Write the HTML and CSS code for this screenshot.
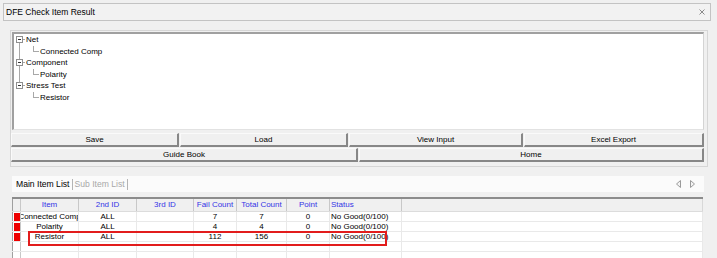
FILE: index.html
```html
<!DOCTYPE html>
<html>
    <head>
        <title> DFE Check Item Result </title>
        <link rel="stylesheet" href="styles.css">
    </head>
    <body>
        <div class="window">

            <!-- Title bar -->
            <div class="titlebar">
                <span>DFE Check Item Result</span>
                <svg class="closeIcon" width="6" height="6" viewBox="0 0 6 6">
                    <path d="M0.5 0.5 L5.5 5.5 M5.5 0.5 L0.5 5.5" stroke="#8a8a8a" stroke-width="1" fill="none"/>
                </svg>
            </div>

            <!-- Tree + buttons -->
            <div class="group">
                <div class="tree">
                    <div class="branch">
                        <div class="node parent"><span class="toggle"></span>Net</div>
                        <div class="node leaf">Connected Comp</div>
                    </div>
                    <div class="branch">
                        <div class="node parent"><span class="toggle"></span>Component</div>
                        <div class="node leaf">Polarity</div>
                    </div>
                    <div class="branch">
                        <div class="node parent"><span class="toggle"></span>Stress Test</div>
                        <div class="node leaf">Resistor</div>
                    </div>
                </div>

                <div class="btnRow firstRow">
                    <button class="btn saveBtn">Save</button>
                    <button class="btn loadBtn">Load</button>
                    <button class="btn viewBtn">View Input</button>
                    <button class="btn excelBtn">Excel Export</button>
                </div>
                <div class="btnRow secondRow">
                    <button class="btn guideBtn">Guide Book</button>
                    <button class="btn homeBtn">Home</button>
                </div>
            </div>

            <!-- Tabs -->
            <div class="tabs">
                <span class="tab">Main Item List</span>
                <span class="tab inactiveTab">Sub Item List</span>
                <div class="tabArrows">
                    <svg width="5" height="8" viewBox="0 0 5 8">
                        <path d="M4.5 0.5 L0.5 4 L4.5 7.5 Z" fill="#f4f4f4" stroke="#9a9a9a" stroke-width="1"/>
                    </svg>
                    <svg width="5" height="8" viewBox="0 0 5 8">
                        <path d="M0.5 0.5 L4.5 4 L0.5 7.5 Z" fill="#f4f4f4" stroke="#9a9a9a" stroke-width="1"/>
                    </svg>
                </div>
            </div>

            <!-- Result grid -->
            <div class="gridWrap">
                <table class="grid">
                    <colgroup>
                        <col style="width:8px">
                        <col style="width:58px">
                        <col style="width:58px">
                        <col style="width:57px">
                        <col style="width:43px">
                        <col style="width:50px">
                        <col style="width:43px">
                        <col style="width:72px">
                        <col>
                    </colgroup>
                    <tr>
                        <th class="rowHead"></th>
                        <th>Item</th>
                        <th>2nd ID</th>
                        <th>3rd ID</th>
                        <th>Fail Count</th>
                        <th>Total Count</th>
                        <th>Point</th>
                        <th class="leftText">Status</th>
                        <th class="filler"></th>
                    </tr>
                    <tr>
                        <td class="rowHead"><span class="flag"></span></td>
                        <td><div class="clip">Connected Comp</div></td>
                        <td>ALL</td>
                        <td></td>
                        <td>7</td>
                        <td>7</td>
                        <td>0</td>
                        <td class="leftText">No Good(0/100)</td>
                        <td></td>
                    </tr>
                    <tr>
                        <td class="rowHead"><span class="flag"></span></td>
                        <td><div class="clip">Polarity</div></td>
                        <td>ALL</td>
                        <td></td>
                        <td>4</td>
                        <td>4</td>
                        <td>0</td>
                        <td class="leftText">No Good(0/100)</td>
                        <td></td>
                    </tr>
                    <tr>
                        <td class="rowHead"><span class="flag"></span></td>
                        <td><div class="clip">Resistor</div></td>
                        <td>ALL</td>
                        <td></td>
                        <td>112</td>
                        <td>156</td>
                        <td>0</td>
                        <td class="leftText">No Good(0/100)</td>
                        <td></td>
                    </tr>
                    <tr>
                        <td class="rowHead"></td><td></td><td></td><td></td><td></td><td></td><td></td><td></td><td></td>
                    </tr>
                    <tr>
                        <td class="rowHead"></td><td></td><td></td><td></td><td></td><td></td><td></td><td></td><td></td>
                    </tr>
                </table>
                <div class="highlight"></div>
            </div>

        </div>
    </body>
</html>
```

FILE: styles.css
```css
html, body{
    margin: 0;
    height: 100%;
    overflow: hidden;
}

body{
    background-color: #f0f0f0;
    font-family: Tahoma, "Liberation Sans", Arial, sans-serif;
    font-size: 8px;
    color: #000;
}

.window{
    padding: 3px 6px 0 3px;
}

/* Title bar */

.titlebar{
    height: 18px;
    box-sizing: border-box;
    border: 1px solid #c3c3c3;
    background: #f2f2f2;
    display: flex;
    align-items: center;
    justify-content: space-between;
    padding: 0 5px 0 2px;
    font-size: 8.5px;
}

/* Tree group */

.group{
    margin: 9px 3px 0 7px;
    border: 1px solid #d6d6d6;
    padding: 1px 3px 4px 0;
}

.tree{
    height: 98px;
    box-sizing: border-box;
    margin-left: 1px;
    background: white;
    border-top: 2px solid #a0a0a0;
    border-left: 2px solid #a0a0a0;
    border-right: 1px solid #d4d4d4;
    border-bottom: 1px solid #e2e2e2;
}

.branch{
    position: relative;
}

.branch:not(:last-child)::before{
    content: "";
    position: absolute;
    left: 5px;
    top: 9px;
    bottom: -2px;
    border-left: 1px solid #a8a8a8;
}

.node{
    position: relative;
    height: 11.5px;
    line-height: 11.5px;
    white-space: nowrap;
}

.parent{
    padding-left: 12px;
}

.parent::after{
    content: "";
    position: absolute;
    left: 9px;
    top: 5px;
    width: 2px;
    border-top: 1px solid #a8a8a8;
}

.toggle{
    position: absolute;
    left: 2px;
    top: 2px;
    width: 7px;
    height: 7px;
    box-sizing: border-box;
    border: 1px solid #8f8f8f;
    background: white;
}

.toggle::after{
    content: "";
    position: absolute;
    left: 1px;
    right: 1px;
    top: 2px;
    height: 1px;
    background: #333;
}

.leaf{
    padding-left: 26px;
}

.leaf::before{
    content: "";
    position: absolute;
    left: 19px;
    top: 0;
    width: 5px;
    height: 5px;
    border-left: 1px solid #a8a8a8;
    border-bottom: 1px solid #a8a8a8;
}

/* Buttons */

.btnRow{
    display: flex;
    gap: 1px;
}

.firstRow{
    margin-top: 3px;
}

.secondRow{
    margin-top: 1px;
}

.btn{
    height: 14px;
    box-sizing: border-box;
    margin: 0;
    padding: 0;
    font-family: inherit;
    font-size: 8px;
    color: #000;
    background: #f0f0f0;
    border-style: solid;
    border-width: 1px 2px 2px 1px;
    border-color: #fafafa #878787 #878787 #fafafa;
    border-radius: 0;
    line-height: 10px;
}

.saveBtn, .loadBtn{
    width: 168px;
}

.viewBtn{
    width: 174px;
}

.excelBtn, .homeBtn{
    flex: 1;
}

.guideBtn{
    width: 347px;
}

/* Tabs */

.tabs{
    display: flex;
    align-items: center;
    height: 16px;
    background: #fbfbfb;
    margin: 9px 7px 0 9px;
    padding-left: 3px;
    font-size: 8.6px;
}

.tab{
    padding: 0 2px 0 1px;
    border-right: 1px solid #b4b4b4;
    line-height: 11px;
}

.inactiveTab{
    color: #a8a8a8;
    padding-left: 2px;
}

.tabArrows{
    margin-left: auto;
    display: flex;
    gap: 9px;
    padding-right: 9px;
}

/* Grid */

.gridWrap{
    position: relative;
    margin: 5px 8px 0 9px;
}

.grid{
    width: 691px;
    table-layout: fixed;
    border-collapse: collapse;
    border-top: 2px solid #8c8c8c;
    border-left: 1px solid #a0a0a0;
    border-right: 1px solid #d8d8d8;
}

.grid th{
    height: 12px;
    padding: 0;
    background: #f0f0f0;
    color: #3434e6;
    font-weight: normal;
    line-height: 12px;
    border-right: 1px solid #c8c8c8;
    border-bottom: 1px solid #dcdcdc;
    white-space: nowrap;
    overflow: hidden;
}

.grid th.filler{
    border-right: none;
}

.grid td{
    height: 9px;
    padding: 0;
    line-height: 9px;
    text-align: center;
    background: white;
    border-right: 1px solid #e9e9e9;
    border-bottom: 1px solid #e9e9e9;
    white-space: nowrap;
    overflow: hidden;
}

.grid .leftText{
    text-align: left;
    padding-left: 1px;
}

.grid .rowHead{
    border-right: 1px solid #c8c8c8;
}

.clip{
    display: flex;
    justify-content: center;
    overflow: hidden;
    white-space: nowrap;
}

.flag{
    display: block;
    width: 7px;
    height: 8px;
    margin-left: 1px;
    background: #ee0000;
}

.highlight{
    position: absolute;
    left: 16px;
    top: 34px;
    width: 359px;
    height: 15px;
    box-sizing: border-box;
    border: 2px solid #e21c1c;
}
```
